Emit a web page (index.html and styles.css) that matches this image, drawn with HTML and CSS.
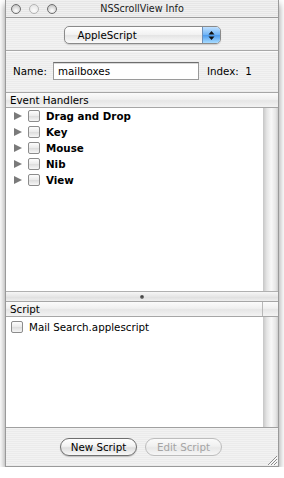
FILE: index.html
```html
<!doctype html>
<html lang="en">
  <head>
    <meta charset="utf-8" />
    <title>NSScrollView Info</title>
    <link rel="stylesheet" href="styles.css">
  </head>
  <body>
    <div class="window">
      <div class="titlebar">
        <div class="lights">
          <span class="light"></span>
          <span class="light light-mid"></span>
          <span class="light"></span>
        </div>
        <div class="title">NSScrollView Info</div>
      </div>

      <div class="content">
        <div class="popup-row">
          <div class="popup">
            <span class="popup-label">AppleScript</span>
            <span class="popup-arrows">
              <svg width="7" height="11" viewBox="0 0 7 11">
                <path d="M3.5 1 L6.5 4.5 H0.5 Z" fill="#111"/>
                <path d="M3.5 10 L6.5 6.5 H0.5 Z" fill="#111"/>
              </svg>
            </span>
          </div>
        </div>

        <div class="sep"></div>

        <div class="name-row">
          <span class="label">Name:</span>
          <div class="field">mailboxes</div>
          <span class="index">Index:&nbsp; 1</span>
        </div>

        <div class="table handlers">
          <div class="header">
            <span class="col">Event Handlers</span>
          </div>
          <div class="tbody">
            <div class="rows">
              <div class="row"><span class="tri"></span><span class="check"></span><b>Drag and Drop</b></div>
              <div class="row"><span class="tri"></span><span class="check"></span><b>Key</b></div>
              <div class="row"><span class="tri"></span><span class="check"></span><b>Mouse</b></div>
              <div class="row"><span class="tri"></span><span class="check"></span><b>Nib</b></div>
              <div class="row"><span class="tri"></span><span class="check"></span><b>View</b></div>
            </div>
            <div class="scroller"></div>
          </div>
        </div>

        <div class="splitter"><span class="dimple"></span></div>

        <div class="table scripts">
          <div class="header">
            <span class="col">Script</span>
            <span class="corner"></span>
          </div>
          <div class="tbody">
            <div class="rows">
              <div class="row plain"><span class="check"></span>Mail Search.applescript</div>
            </div>
            <div class="scroller"></div>
          </div>
        </div>

        <div class="buttons">
          <button class="btn">New Script</button>
          <button class="btn" disabled>Edit Script</button>
        </div>
      </div>

      <svg class="grip" width="11" height="11" viewBox="0 0 11 11">
        <path d="M10 1 L1 10 M10 4 L4 10 M10 7 L7 10" stroke="#8c8c8c" stroke-width="1"/>
        <path d="M10.5 2 L2 10.5 M10.5 5 L5 10.5 M10.5 8 L8 10.5" stroke="#fff" stroke-width="1"/>
      </svg>
    </div>
  </body>
</html>
```

FILE: styles.css
```css
html,
body {
  margin: 0;
  padding: 0;
  background: #fff;
  font-family: "Lucida Grande", "DejaVu Sans", sans-serif;
  font-size: 10.3px;
  color: #000;
}
.window {
  position: relative;
  margin-left: 5px;
  width: 272px;
  height: 466px;
  border: 1px solid #9a9a9a;
  border-top: none;
  box-shadow: 0 4px 7px rgba(0, 0, 0, 0.45);
  background: repeating-linear-gradient(#f2f2f2 0 1px, #ebebeb 1px 2px);
  display: flex;
  flex-direction: column;
}
.titlebar {
  height: 17px;
  border-bottom: 1px solid #9c9c9c;
  background: repeating-linear-gradient(#f0f0f0 0 1px, #e6e6e6 1px 2px);
  display: flex;
  align-items: center;
  position: relative;
}
.lights {
  display: flex;
  gap: 8px;
  padding-left: 5px;
}
.light {
  width: 8px;
  height: 8px;
  border-radius: 50%;
  border: 1px solid #6e6e6e;
  background: radial-gradient(circle at 50% 70%, #ffffff, #d2d2d2 65%, #a8a8a8);
}
.light-mid {
  border-color: #b4b4b4;
  background: radial-gradient(circle at 50% 70%, #fcfcfc, #e0e0e0);
}
.title {
  position: absolute;
  left: 0;
  right: 0;
  text-align: center;
  font-size: 9.6px;
  color: #1a1a1a;
}
.content {
  flex: 1;
  display: flex;
  flex-direction: column;
}
.popup-row {
  padding-top: 8px;
  display: flex;
  justify-content: center;
}
.popup {
  width: 155px;
  height: 16px;
  border: 1px solid #8a8a8a;
  border-radius: 5px;
  background: linear-gradient(#ffffff, #f1f1f1 50%, #e4e4e4 51%, #fafafa);
  display: flex;
  align-items: center;
  overflow: hidden;
  box-shadow: 0 1px 1px rgba(0, 0, 0, 0.15);
}
.popup-label {
  flex: 1;
  padding-left: 13px;
}
.popup-arrows {
  width: 17px;
  height: 16px;
  border-left: 1px solid #6d8fb8;
  background: linear-gradient(#bfe0ff, #6eb3f5 50%, #4c9bee 51%, #a8dcff);
  display: flex;
  align-items: center;
  justify-content: center;
}
.sep {
  margin-top: 6px;
  height: 1px;
  background: #a8a8a8;
  border-bottom: 1px solid #fbfbfb;
}
.name-row {
  margin-top: 10px;
  display: flex;
  align-items: center;
  padding-left: 7px;
}
.label {
  width: 40px;
}
.field {
  width: 140px;
  height: 16px;
  line-height: 16px;
  padding-left: 4px;
  border: 1px solid #9a9a9a;
  border-top-color: #6e6e6e;
  background: #fff;
  box-shadow: inset 0 1px 0 #d8d8d8;
}
.index {
  margin-left: 8px;
}
.table {
  display: flex;
  flex-direction: column;
  background: #fff;
}
.handlers {
  margin-top: 12px;
  height: 199px;
}
.scripts {
  height: 126px;
  border-bottom: 1px solid #a0a0a0;
}
.header {
  height: 14px;
  border-top: 1px solid #a6a6a6;
  border-bottom: 1px solid #a6a6a6;
  background: linear-gradient(#fbfbfb, #f0f0f0 45%, #e6e6e6 55%, #f3f3f3);
  display: flex;
  line-height: 14px;
}
.col {
  flex: 1;
  padding-left: 4px;
}
.corner {
  width: 15px;
  border-left: 1px solid #b8b8b8;
}
.tbody {
  flex: 1;
  display: flex;
}
.rows {
  flex: 1;
}
.row {
  height: 16px;
  display: flex;
  align-items: center;
  padding-left: 8px;
}
.row b {
  font-weight: bold;
}
.plain {
  padding-top: 2px;
  padding-left: 5px;
}
.tri {
  width: 0;
  height: 0;
  border-top: 4.5px solid transparent;
  border-bottom: 4.5px solid transparent;
  border-left: 8px solid #7a7a7a;
  margin-right: 6px;
}
.check {
  width: 10px;
  height: 10px;
  border: 1px solid #8c8c8c;
  border-radius: 2px;
  background: linear-gradient(#fdfdfd, #eaeaea 50%, #dcdcdc 51%, #f6f6f6);
  margin-right: 6px;
}
.scroller {
  width: 15px;
  background: linear-gradient(to right, #c6c6c6, #e4e4e4 25%, #f8f8f8 55%, #e6e6e6 85%, #cdcdcd);
}
.splitter {
  height: 9px;
  border-top: 1px solid #b0b0b0;
  background: linear-gradient(#f6f6f6, #e6e6e6 50%, #dedede 51%, #eeeeee);
  display: flex;
  justify-content: center;
  align-items: center;
}
.dimple {
  width: 4px;
  height: 4px;
  border-radius: 50%;
  background: radial-gradient(circle at 50% 35%, #333, #777 70%, #ddd);
}
.buttons {
  display: flex;
  justify-content: center;
  gap: 8px;
  padding-top: 10px;
  padding-right: 2px;
}
.btn {
  width: 77px;
  height: 18px;
  padding: 0;
  border: 1px solid #6f6f6f;
  border-radius: 9px;
  background: linear-gradient(#ffffff, #f2f2f2 45%, #dedede 55%, #f8f8f8);
  font-family: "Lucida Grande", "DejaVu Sans", sans-serif;
  font-size: 10.3px;
  color: #000;
  box-shadow: 0 1px 1px rgba(0, 0, 0, 0.2);
}
.btn:disabled {
  border-color: #bdbdbd;
  color: #a4a4a4;
  background: linear-gradient(#fafafa, #f0f0f0 45%, #e8e8e8 55%, #f6f6f6);
  box-shadow: none;
}
.grip {
  position: absolute;
  right: 0;
  bottom: 0;
}
```
